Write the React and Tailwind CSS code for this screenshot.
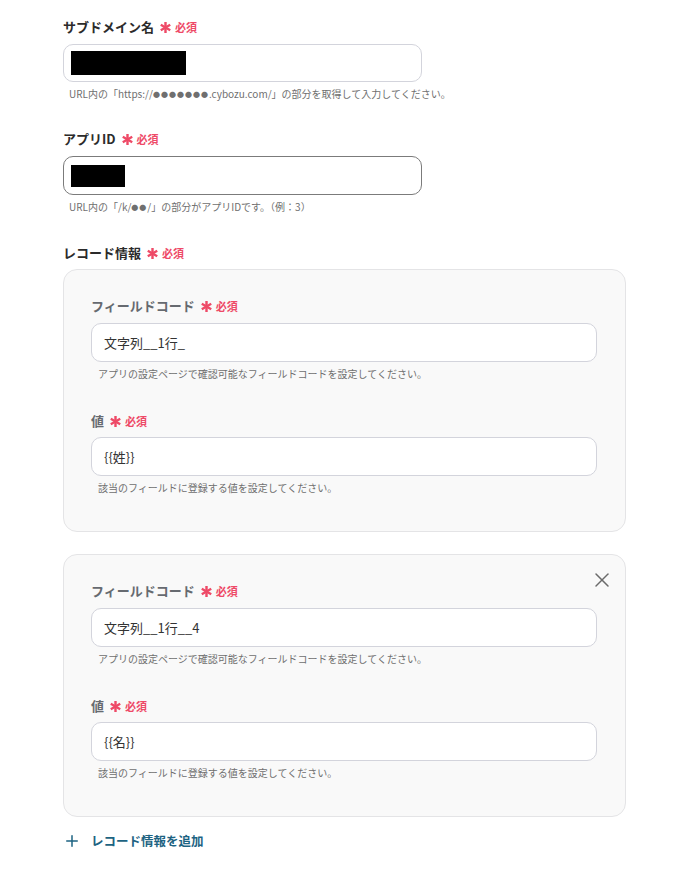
import { X, Plus } from "lucide-react";

const FONT = { fontFamily: '"Noto Sans CJK JP", "Noto Sans", sans-serif' };

function Required() {
  return (
    <span className="ml-[6px] inline-flex items-center gap-[4px] text-[#ee4a67]">
      <svg width="11" height="11" viewBox="0 0 10 10" className="shrink-0">
        <g stroke="currentColor" strokeWidth="2.2" strokeLinecap="butt">
          <line x1="5" y1="0" x2="5" y2="10" />
          <line x1="0.7" y1="2.5" x2="9.3" y2="7.5" />
          <line x1="0.7" y1="7.5" x2="9.3" y2="2.5" />
        </g>
      </svg>
      <span className="text-[11px] font-bold leading-none">必須</span>
    </span>
  );
}

function Label({ children, muted }) {
  return (
    <div
      className={`flex items-center h-[20px] text-[13px] font-bold leading-[20px] ${
        muted ? "text-[#666a70]" : "text-[#2b2b2b]"
      }`}
    >
      <span>{children}</span>
      <Required />
    </div>
  );
}

function Help({ children, inset = "pl-[6px]" }) {
  return (
    <p className={`mt-[4px] h-[16px] text-[10px] leading-[16px] text-[#6f6f6f] ${inset}`}>
      {children}
    </p>
  );
}

function Dots({ n }) {
  return (
    <span className="inline-block text-[7px] leading-none tracking-[1px] align-[1px]">
      {"●".repeat(n)}
    </span>
  );
}

function RecordCard({ code, value, removable }) {
  return (
    <div className="relative rounded-[14px] border border-[#e4e4e6] bg-[#f9f9f9] pt-[26px] pb-[35px] pl-[27px] pr-[28px]">
      {removable && (
        <button className="absolute right-[11px] top-[13px] text-[#6b6b6b]">
          <X size={24} strokeWidth={1.5} />
        </button>
      )}
      <Label muted>フィールドコード</Label>
      <div className="mt-[7px] flex h-[39px] items-center rounded-[10px] border border-[#d3d4dc] bg-white px-[12px] text-[13px] text-[#333]">
        {code}
      </div>
      <Help inset="pl-[7px]">アプリの設定ページで確認可能なフィールドコードを設定してください。</Help>
      <div className="mt-[29px]">
        <Label muted>値</Label>
      </div>
      <div className="mt-[6px] flex h-[39px] items-center rounded-[10px] border border-[#d3d4dc] bg-white px-[12px] text-[13px] text-[#333]">
        {value}
      </div>
      <Help inset="pl-[7px]">該当のフィールドに登録する値を設定してください。</Help>
    </div>
  );
}

export default function App() {
  return (
    <div className="min-h-[871px] w-[687px] bg-white" style={FONT}>
      <div className="w-[563px] ml-[63px] pt-[17px] pb-[10px]">
        <Label>サブドメイン名</Label>
        <div className="mt-[7px] flex h-[38px] w-[359px] items-center rounded-[10px] border border-[#d3d4dc] bg-white px-[7px]">
          <div className="h-[24px] w-[115px] bg-black" />
        </div>
        <Help>
          URL内の「https://<Dots n={7} />.cybozu.com/」の部分を取得して入力してください。
        </Help>

        <div className="mt-[27px]">
          <Label>アプリID</Label>
        </div>
        <div className="mt-[7px] flex h-[39px] w-[359px] items-center rounded-[10px] border border-[#7b7b7b] bg-white px-[7px]">
          <div className="h-[22px] w-[54px] bg-black" />
        </div>
        <Help>
          URL内の「/k/<Dots n={2} />/」の部分がアプリIDです。（例：3）
        </Help>

        <div className="mt-[28px]">
          <Label>レコード情報</Label>
        </div>
        <div className="mt-[6px] flex flex-col gap-[22px]">
          <RecordCard code="文字列__1行_" value="{{姓}}" />
          <RecordCard code="文字列__1行__4" value="{{名}}" removable />
        </div>

        <button className="mt-[15px] flex items-center gap-[10px] text-[12.5px] font-bold text-[#1d6382]">
          <Plus size={18} strokeWidth={2} />
          <span>レコード情報を追加</span>
        </button>
      </div>
    </div>
  );
}
